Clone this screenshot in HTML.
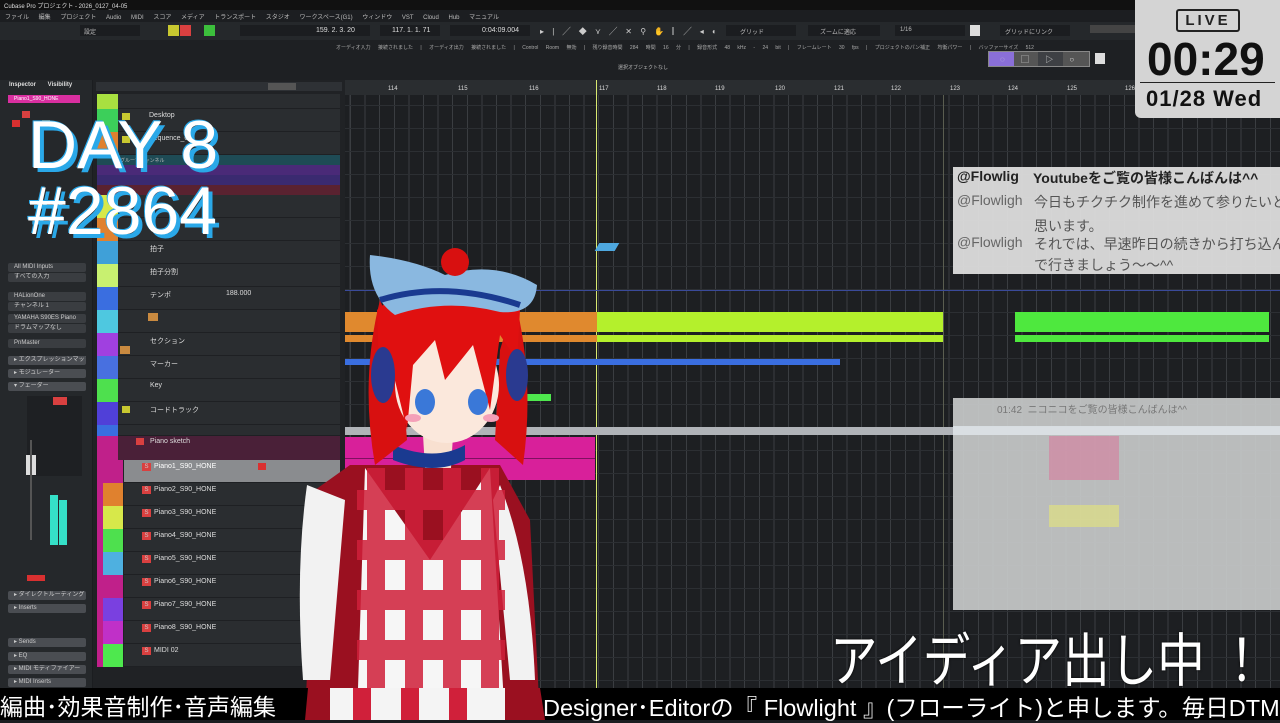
<!DOCTYPE html>
<html><head><meta charset="utf-8">
<style>
*{margin:0;padding:0;box-sizing:border-box}
body{width:1280px;height:720px;overflow:hidden;background:#1b1d20;font-family:"Liberation Sans","Noto Sans CJK JP",sans-serif;position:relative;color:#ccc}
.a{position:absolute}
.t{font-size:7px;color:#bbb;white-space:nowrap}
.row{position:absolute;left:118px;width:222px;height:23px;background:#2a2d30;border-bottom:1px solid #1e2023}
.nm{position:absolute;left:32px;top:3px;font-size:7px;color:#ddd}
.ms{position:absolute;top:3px;width:9px;height:8px;font-size:6px;text-align:center;line-height:8px}
.ib{position:absolute;left:8px;width:78px;height:9px;background:#3a3d41;border-radius:2px;font-size:6px;color:#ccc;padding-left:6px;line-height:9px;overflow:hidden;white-space:nowrap}
.cl{position:absolute;font-size:14px;white-space:nowrap}
</style></head><body>
<div class="a" style="left:0;top:0;width:1280px;height:10px;background:#111"></div>
<div class="a t" style="left:4px;top:1px;font-size:6px;color:#ddd">Cubase Pro プロジェクト - 2026_0127_04-05</div>
<div class="a" style="left:0;top:10px;width:1280px;height:12px;background:#1c1e21"></div>
<div class="a t" style="left:5px;top:12px;font-size:6px;word-spacing:8px">ファイル 編集 プロジェクト Audio MIDI スコア メディア トランスポート スタジオ ワークスペース(G1) ウィンドウ VST Cloud Hub マニュアル</div>
<div class="a" style="left:0;top:22px;width:1280px;height:18px;background:#25282b"></div>
<div class="a" style="left:80px;top:25px;width:60px;height:11px;background:#1b1d20"></div>
<div class="a t" style="left:84px;top:27px;font-size:6px">設定</div>
<div class="a" style="left:168px;top:25px;width:11px;height:11px;background:#c8c830"></div>
<div class="a" style="left:180px;top:25px;width:11px;height:11px;background:#d94040"></div>
<div class="a" style="left:204px;top:25px;width:11px;height:11px;background:#3cbf3c"></div>
<div class="a" style="left:240px;top:25px;width:130px;height:11px;background:#1b1d20"></div>
<div class="a t" style="left:316px;top:27px;font-size:7px;color:#ddd">159. 2. 3. 20</div>
<div class="a" style="left:380px;top:25px;width:60px;height:11px;background:#1b1d20"></div>
<div class="a t" style="left:392px;top:27px;font-size:7px;color:#ddd">117. 1. 1. 71</div>
<div class="a" style="left:450px;top:25px;width:80px;height:11px;background:#1b1d20"></div>
<div class="a t" style="left:482px;top:27px;font-size:7px;color:#ddd">0:04:09.004</div>
<div class="a t" style="left:540px;top:26px;font-size:8px;color:#ccc;letter-spacing:3px">▸ | ╱ ◆ ⋎ ╱ ✕ ⚲ ✋ ▏╱ ◂ ◐</div>
<div class="a" style="left:726px;top:25px;width:70px;height:11px;background:#1b1d20"></div>
<div class="a t" style="left:740px;top:27px;font-size:6px">グリッド</div>
<div class="a" style="left:808px;top:25px;width:72px;height:11px;background:#1b1d20"></div>
<div class="a t" style="left:820px;top:27px;font-size:6px">ズームに適応</div>
<div class="a" style="left:895px;top:25px;width:70px;height:11px;background:#1b1d20"></div>
<div class="a t" style="left:900px;top:27px;font-size:6px">1/16</div>
<div class="a" style="left:970px;top:25px;width:10px;height:11px;background:#ddd"></div>
<div class="a" style="left:1000px;top:25px;width:70px;height:11px;background:#1b1d20"></div>
<div class="a t" style="left:1005px;top:27px;font-size:6px">グリッドにリンク</div>
<div class="a" style="left:1090px;top:25px;width:45px;height:8px;background:#444"></div>
<div class="a" style="left:0;top:40px;width:1280px;height:16px;background:#1e2023"></div>
<div class="a t" style="left:336px;top:44px;font-size:5px;word-spacing:6px;color:#aaa">オーディオ入力 接続されました | オーディオ出力 接続されました | Control Room 無効 | 残り録音時間 284 時間 16 分 | 録音形式 48 kHz - 24 bit | フレームレート 30 fps | プロジェクトのパン補正 均衡パワー | バッファーサイズ 512</div>
<div class="a" style="left:0;top:56px;width:1280px;height:24px;background:#1e2023"></div>
<div class="a t" style="left:618px;top:64px;font-size:5px">選択オブジェクトなし</div>
<div class="a" style="left:988px;top:51px;width:102px;height:16px;background:#555;border:1px solid #888"></div>
<div class="a" style="left:989px;top:52px;width:25px;height:14px;background:#8a6fd8"></div>
<div class="a" style="left:1038px;top:52px;width:25px;height:14px;background:#3e4044"></div>
<div class="a t" style="left:1000px;top:54px;font-size:8px;color:#ddd;word-spacing:14px">◌ ▢ ▷ ○</div>
<div class="a" style="left:1095px;top:53px;width:10px;height:11px;background:#ddd"></div>
<!-- inspector -->
<div class="a" style="left:0;top:80px;width:92px;height:610px;background:#25282b"></div>
<div class="a t" style="left:9px;top:82px;font-size:6px;color:#ddd;font-weight:bold">Inspector &nbsp;&nbsp;&nbsp;&nbsp;&nbsp; Visibility</div>
<div class="a" style="left:8px;top:95px;width:72px;height:8px;background:#d92fa0"></div>
<div class="a t" style="left:14px;top:96px;font-size:5px;color:#fff">Piano1_S90_HONE</div>
<div class="a" style="left:22px;top:111px;width:8px;height:7px;background:#d94040"></div>
<div class="a" style="left:12px;top:120px;width:8px;height:7px;background:#d93030"></div>
<div class="a" style="left:42px;top:120px;width:8px;height:7px;background:#c98a40"></div>
<div class="ib" style="top:263px">All MIDI Inputs</div>
<div class="ib" style="top:273px">すべての入力</div>
<div class="ib" style="top:292px">HALionOne</div>
<div class="ib" style="top:302px">チャンネル 1</div>
<div class="ib" style="top:314px">YAMAHA S90ES Piano</div>
<div class="ib" style="top:324px">ドラムマップなし</div>
<div class="ib" style="top:339px">PnMaster</div>
<div class="ib" style="top:356px;background:#4a4d52">▸ エクスプレッションマップ</div>
<div class="ib" style="top:369px;background:#4a4d52">▸ モジュレーター</div>
<div class="ib" style="top:382px;background:#4a4d52">▾ フェーダー</div>
<div class="a" style="left:27px;top:396px;width:55px;height:80px;background:#1e2023"></div>
<div class="a" style="left:53px;top:397px;width:14px;height:8px;background:#d94040"></div>
<div class="a" style="left:26px;top:455px;width:10px;height:20px;background:#ddd"></div>
<div class="a" style="left:30px;top:440px;width:2px;height:100px;background:#555"></div>
<div class="a" style="left:50px;top:495px;width:8px;height:50px;background:#35e0c8"></div>
<div class="a" style="left:59px;top:500px;width:8px;height:45px;background:#35e0c8"></div>
<div class="a" style="left:27px;top:575px;width:18px;height:6px;background:#d93030"></div>
<div class="ib" style="top:591px;background:#4a4d52">▸ ダイレクトルーティング</div>
<div class="ib" style="top:604px;background:#4a4d52">▸ Inserts</div>
<div class="ib" style="top:638px;background:#4a4d52">▸ Sends</div>
<div class="ib" style="top:652px;background:#4a4d52">▸ EQ</div>
<div class="ib" style="top:665px;background:#4a4d52">▸ MIDI モディファイアー</div>
<div class="ib" style="top:678px;background:#4a4d52">▸ MIDI Inserts</div>
<!-- track list -->
<div class="a" style="left:93px;top:80px;width:252px;height:610px;background:#202225"></div>
<div class="a" style="left:96px;top:82px;width:246px;height:9px;background:#2e3135"></div>
<div class="a" style="left:268px;top:83px;width:28px;height:7px;background:#555"></div>
<div class="a" style="left:97px;top:94px;width:21px;height:15px;background:#a8e040"></div>
<div class="a" style="left:97px;top:109px;width:21px;height:23px;background:#3ccf5a"></div>
<div class="a" style="left:97px;top:132px;width:21px;height:23px;background:#e0812e"></div>
<div class="row" style="top:94px;height:15px"></div>
<div class="row" style="top:109px"><span class="nm" style="left:31px">Desktop</span><div class="a" style="left:4px;top:4px;width:8px;height:7px;background:#c8c830"></div></div>
<div class="row" style="top:132px"><span class="nm" style="left:31px">Sequence_01</span><div class="a" style="left:4px;top:4px;width:8px;height:7px;background:#c8c830"></div></div>
<div class="a" style="left:97px;top:155px;width:243px;height:10px;background:#1e4b55"></div>
<div class="a t" style="left:120px;top:157px;font-size:5px">グループチャンネル</div>
<div class="a" style="left:97px;top:165px;width:243px;height:10px;background:#4a2a78"></div>
<div class="a" style="left:97px;top:175px;width:243px;height:10px;background:#3a2a70"></div>
<div class="a" style="left:97px;top:185px;width:243px;height:10px;background:#5a2230"></div>
<div class="a" style="left:97px;top:195px;width:21px;height:23px;background:#d7e84a"></div>
<div class="a" style="left:97px;top:218px;width:21px;height:23px;background:#e0812e"></div>
<div class="a" style="left:97px;top:241px;width:21px;height:23px;background:#3fa0d8"></div>
<div class="a" style="left:97px;top:264px;width:21px;height:23px;background:#c8f070"></div>
<div class="a" style="left:97px;top:287px;width:21px;height:23px;background:#3a6ee0"></div>
<div class="a" style="left:97px;top:310px;width:21px;height:23px;background:#4ec8e0"></div>
<div class="a" style="left:97px;top:333px;width:21px;height:23px;background:#a040e0"></div>
<div class="a" style="left:97px;top:356px;width:21px;height:23px;background:#4870e0"></div>
<div class="a" style="left:97px;top:379px;width:21px;height:23px;background:#4ee04e"></div>
<div class="a" style="left:97px;top:402px;width:21px;height:23px;background:#5040d8"></div>
<div class="a" style="left:97px;top:425px;width:21px;height:11px;background:#3a6ee0"></div>
<div class="row" style="top:195px"></div><div class="row" style="top:218px"></div><div class="row" style="top:241px"><span class="nm">拍子</span></div>
<div class="row" style="top:264px"><span class="nm">拍子分割</span></div>
<div class="row" style="top:287px"><span class="nm">テンポ</span><span class="nm" style="left:108px">188.000</span></div>
<div class="row" style="top:310px"><div class="a" style="left:30px;top:3px;width:10px;height:8px;background:#c98a40"></div></div>
<div class="row" style="top:333px"><span class="nm">セクション</span><div class="a" style="left:2px;top:13px;width:10px;height:8px;background:#c98a40"></div></div>
<div class="row" style="top:356px"><span class="nm">マーカー</span></div>
<div class="row" style="top:379px"><span class="nm">Key</span></div>
<div class="row" style="top:402px"><span class="nm">コードトラック</span><div class="a" style="left:4px;top:4px;width:8px;height:7px;background:#c8c830"></div></div>
<div class="row" style="top:425px;height:11px"></div>
<div class="a" style="left:97px;top:436px;width:21px;height:24px;background:#c0208a"></div>
<div class="a" style="left:118px;top:436px;width:222px;height:24px;background:#4a2038"></div>
<div class="a t" style="left:150px;top:438px;font-size:7px;color:#ddd">Piano sketch</div>
<div class="a" style="left:136px;top:438px;width:8px;height:7px;background:#d94040"></div>
<div class="a" style="left:97px;top:460px;width:6px;height:207px;background:#c0208a"></div>
<div class="a" style="left:103px;top:460px;width:20px;height:23px;background:#c0208a"></div>
<div class="a" style="left:103px;top:483px;width:20px;height:23px;background:#e0812e"></div>
<div class="a" style="left:103px;top:506px;width:20px;height:23px;background:#d7e84a"></div>
<div class="a" style="left:103px;top:529px;width:20px;height:23px;background:#4ee04e"></div>
<div class="a" style="left:103px;top:552px;width:20px;height:23px;background:#4eb0e0"></div>
<div class="a" style="left:103px;top:575px;width:20px;height:23px;background:#c0208a"></div>
<div class="a" style="left:103px;top:598px;width:20px;height:23px;background:#7a40e0"></div>
<div class="a" style="left:103px;top:621px;width:20px;height:23px;background:#c030c8"></div>
<div class="a" style="left:103px;top:644px;width:20px;height:23px;background:#4ee84e"></div>
<div class="row" style="left:124px;width:216px;top:460px;background:#8a8c8f"><span class="nm" style="left:30px;color:#fff">Piano1_S90_HONE</span><div class="ms" style="left:18px;background:#d94040">S</div><div class="a" style="left:134px;top:3px;width:8px;height:7px;background:#d93030"></div></div>
<div class="row" style="left:124px;width:216px;top:483px"><span class="nm" style="left:30px">Piano2_S90_HONE</span><div class="ms" style="left:18px;background:#d94040">S</div></div>
<div class="row" style="left:124px;width:216px;top:506px"><span class="nm" style="left:30px">Piano3_S90_HONE</span><div class="ms" style="left:18px;background:#d94040">S</div></div>
<div class="row" style="left:124px;width:216px;top:529px"><span class="nm" style="left:30px">Piano4_S90_HONE</span><div class="ms" style="left:18px;background:#d94040">S</div></div>
<div class="row" style="left:124px;width:216px;top:552px"><span class="nm" style="left:30px">Piano5_S90_HONE</span><div class="ms" style="left:18px;background:#d94040">S</div></div>
<div class="row" style="left:124px;width:216px;top:575px"><span class="nm" style="left:30px">Piano6_S90_HONE</span><div class="ms" style="left:18px;background:#d94040">S</div></div>
<div class="row" style="left:124px;width:216px;top:598px"><span class="nm" style="left:30px">Piano7_S90_HONE</span><div class="ms" style="left:18px;background:#d94040">S</div></div>
<div class="row" style="left:124px;width:216px;top:621px"><span class="nm" style="left:30px">Piano8_S90_HONE</span><div class="ms" style="left:18px;background:#d94040">S</div></div>
<div class="row" style="left:124px;width:216px;top:644px"><span class="nm" style="left:30px">MIDI 02</span><div class="ms" style="left:18px;background:#d94040">S</div></div>
<!-- ruler -->
<div class="a" style="left:345px;top:80px;width:935px;height:15px;background:#2a2d30"></div>
<div class="a t" style="left:388px;top:86px;font-size:6px;color:#ddd;">114</div>
<div class="a t" style="left:458px;top:86px;font-size:6px;color:#ddd">115</div>
<div class="a t" style="left:529px;top:86px;font-size:6px;color:#ddd">116</div>
<div class="a t" style="left:599px;top:86px;font-size:6px;color:#ddd">117</div>
<div class="a t" style="left:657px;top:86px;font-size:6px;color:#ddd">118</div>
<div class="a t" style="left:715px;top:86px;font-size:6px;color:#ddd">119</div>
<div class="a t" style="left:775px;top:86px;font-size:6px;color:#ddd">120</div>
<div class="a t" style="left:834px;top:86px;font-size:6px;color:#ddd">121</div>
<div class="a t" style="left:891px;top:86px;font-size:6px;color:#ddd">122</div>
<div class="a t" style="left:950px;top:86px;font-size:6px;color:#ddd">123</div>
<div class="a t" style="left:1008px;top:86px;font-size:6px;color:#ddd">124</div>
<div class="a t" style="left:1067px;top:86px;font-size:6px;color:#ddd">125</div>
<div class="a t" style="left:1125px;top:86px;font-size:6px;color:#ddd">126</div>
<!-- grid -->
<div class="a" style="left:345px;top:95px;width:935px;height:595px;background:#1d1f22;background-image:repeating-linear-gradient(90deg,#3a3d41 0 1px,transparent 1px 14.6px);background-position:5px 0"></div>
<div class="a" style="left:345px;top:95px;width:935px;height:595px;background-image:repeating-linear-gradient(180deg,#2c2f33 0 1px,transparent 1px 23px);background-position:0 10px"></div>
<div class="a" style="left:596px;top:80px;width:1px;height:610px;background:#d8e870"></div>
<div class="a" style="left:943px;top:95px;width:1px;height:595px;background:#5a5d50"></div>
<div class="a" style="left:345px;top:290px;width:935px;height:1px;background:#3a4a9a"></div>
<div class="a" style="left:597px;top:243px;width:20px;height:8px;background:#4ea8e0;transform:skewX(-30deg)"></div>
<div class="a" style="left:345px;top:312px;width:252px;height:20px;background:#e0892e"></div>
<div class="a" style="left:345px;top:335px;width:252px;height:7px;background:#e0892e"></div>
<div class="a" style="left:597px;top:312px;width:346px;height:20px;background:#b4f02c"></div>
<div class="a" style="left:597px;top:335px;width:346px;height:7px;background:#b4f02c"></div>
<div class="a" style="left:1015px;top:312px;width:254px;height:20px;background:#4ee83e"></div>
<div class="a" style="left:1015px;top:335px;width:254px;height:7px;background:#4ee83e"></div>
<div class="a" style="left:345px;top:359px;width:495px;height:6px;background:#3a6ee0"></div>
<div class="a" style="left:527px;top:394px;width:24px;height:7px;background:#4ee84e"></div>
<div class="a" style="left:345px;top:427px;width:935px;height:8px;background:#b0b3b8"></div>
<div class="a" style="left:345px;top:437px;width:250px;height:43px;background:#d8209a"></div>
<div class="a" style="left:345px;top:458px;width:250px;height:1px;background:#801060"></div>
<!-- chat overlays -->
<div class="a" style="left:953px;top:167px;width:327px;height:107px;background:rgba(225,225,225,0.93);overflow:hidden">
<div class="cl" style="left:4px;top:1px;color:#222;font-weight:bold">@Flowlig</div>
<div class="cl" style="left:80px;top:1px;color:#222;font-weight:bold">Youtubeをご覧の皆様こんばんは^^</div>
<div class="cl" style="left:4px;top:25px;color:#666">@Flowligh</div>
<div class="cl" style="left:81px;top:25px;color:#555">今日もチクチク制作を進めて参りたいと</div>
<div class="cl" style="left:81px;top:49px;color:#555">思います。</div>
<div class="cl" style="left:4px;top:67px;color:#666">@Flowligh</div>
<div class="cl" style="left:81px;top:67px;color:#555">それでは、早速昨日の続きから打ち込んで</div>
<div class="cl" style="left:81px;top:88px;color:#555">で行きましょう～～^^</div>
</div>
<div class="a" style="left:953px;top:398px;width:327px;height:212px;background:rgba(200,202,202,0.92)"></div>
<div class="a" style="left:953px;top:426px;width:327px;height:9px;background:rgba(220,225,230,0.9)"></div>
<div class="a" style="left:997px;top:401px;font-size:10px;color:#777;white-space:nowrap">01:42 &nbsp;ニコニコをご覧の皆様こんばんは^^</div>
<div class="a" style="left:1049px;top:436px;width:70px;height:44px;background:rgba(220,110,150,0.5)"></div>
<div class="a" style="left:1049px;top:505px;width:70px;height:22px;background:rgba(230,230,120,0.6)"></div>
<!-- live clock -->
<div class="a" style="left:1135px;top:0;width:145px;height:118px;background:#d4d4d4;border-radius:0 0 0 6px"></div>
<div class="a" style="left:1176px;top:9px;width:64px;height:23px;border:2px solid #222;border-radius:3px;font-size:15px;font-weight:bold;color:#222;text-align:center;line-height:19px;letter-spacing:3px">LIVE</div>
<div class="a" style="left:1147px;top:34px;font-size:46px;font-weight:bold;color:#111;line-height:50px;white-space:nowrap">00:29</div>
<div class="a" style="left:1140px;top:82px;width:135px;height:1px;background:#222"></div>
<div class="a" style="left:1146px;top:86px;font-size:22px;font-weight:bold;color:#111;white-space:nowrap;letter-spacing:1px">01/28 Wed</div>
<!-- DAY 8 -->
<div class="a" style="left:28px;top:112px;font-size:68px;color:#fff;line-height:66px;text-shadow:4px 4px 0 #2aa8e8,-1px -1px 0 #2aa8e8">DAY 8<br>#2864</div>
<!-- character -->
<svg class="a" style="left:295px;top:240px" width="260" height="480" viewBox="0 0 260 480">
<path d="M55 225 L20 250 L10 480 L245 480 L235 280 L205 225 Z" fill="#9a1020"/>
<path d="M12 245 Q0 330 8 440 L35 440 L50 260 Z" fill="#f2f2f2"/>
<path d="M205 245 Q235 320 240 440 L215 440 L198 260 Z" fill="#f2f2f2"/>
<path d="M70 228 L62 480 L210 480 L195 228 L135 320 Z" fill="#f6f6f6"/>
<g fill="#d0203a" opacity="0.85">
<rect x="62" y="250" width="148" height="20"/><rect x="62" y="300" width="148" height="20"/><rect x="62" y="350" width="148" height="20"/><rect x="62" y="400" width="148" height="20"/><rect x="62" y="450" width="148" height="20"/>
<rect x="72" y="228" width="18" height="252"/><rect x="110" y="228" width="18" height="252"/><rect x="148" y="228" width="18" height="252"/><rect x="186" y="228" width="18" height="252"/>
</g>
<path d="M128 195 L158 195 L156 228 L130 228 Z" fill="#f8e0d0"/>
<path d="M98 205 Q140 222 170 205 L170 220 Q140 236 98 220 Z" fill="#1a3a90"/>
<path d="M85 60 Q65 140 80 225 L112 200 L105 110 Z" fill="#d81010"/>
<path d="M220 60 Q240 140 228 225 L200 200 L205 110 Z" fill="#d81010"/>
<ellipse cx="152" cy="145" rx="52" ry="58" fill="#fbe8dc"/>
<path d="M82 70 Q150 10 225 70 L222 120 L205 95 L195 170 L178 105 L150 140 L140 100 L118 125 L112 190 L95 120 L85 150 Z" fill="#e01010"/>
<ellipse cx="88" cy="135" rx="12" ry="28" fill="#2a3a90"/>
<ellipse cx="222" cy="135" rx="11" ry="26" fill="#2a3a90"/>
<ellipse cx="130" cy="162" rx="10" ry="13" fill="#3a78d8"/>
<ellipse cx="183" cy="162" rx="10" ry="13" fill="#3a78d8"/>
<ellipse cx="118" cy="178" rx="8" ry="4" fill="#f4a0b8"/>
<ellipse cx="196" cy="178" rx="8" ry="4" fill="#f4a0b8"/>
<path d="M75 15 Q120 20 150 35 Q200 20 242 45 Q240 75 205 72 Q150 58 100 75 Q72 55 75 15Z" fill="#8ab8e0"/>
<path d="M85 60 Q150 40 225 65" stroke="#1a3a90" stroke-width="6" fill="none"/>
<circle cx="160" cy="22" r="14" fill="#d81010"/>
</svg>
<!-- big text -->
<div class="a" style="left:830px;top:614px;font-size:58px;color:#fff;white-space:nowrap;transform:scaleX(0.82);transform-origin:0 0;text-shadow:0 0 3px #000">アイディア出し中 ！</div>
<!-- ticker -->
<div class="a" style="left:0;top:688px;width:1280px;height:32px;background:#000"></div>
<div class="a" style="left:0;top:688px;font-size:23px;color:#fff;white-space:nowrap">編曲･効果音制作･音声編集</div>
<div class="a" style="left:543px;top:689px;font-size:23.5px;color:#fff;white-space:nowrap">Designer･Editorの『 Flowlight 』(フローライト)と申します。毎日DTM</div>
<svg class="a" style="left:300px;top:688px" width="250" height="32"><path d="M8 0 L5 32 L245 32 L240 0Z" fill="#9a1020"/><path d="M30 0 L30 32 L205 32 L205 0Z" fill="#f4f4f4"/><path d="M62 0 L62 32 M110 0 L110 32 M158 0 L158 32" stroke="#d0203a" stroke-width="18"/></svg>
</body></html>
